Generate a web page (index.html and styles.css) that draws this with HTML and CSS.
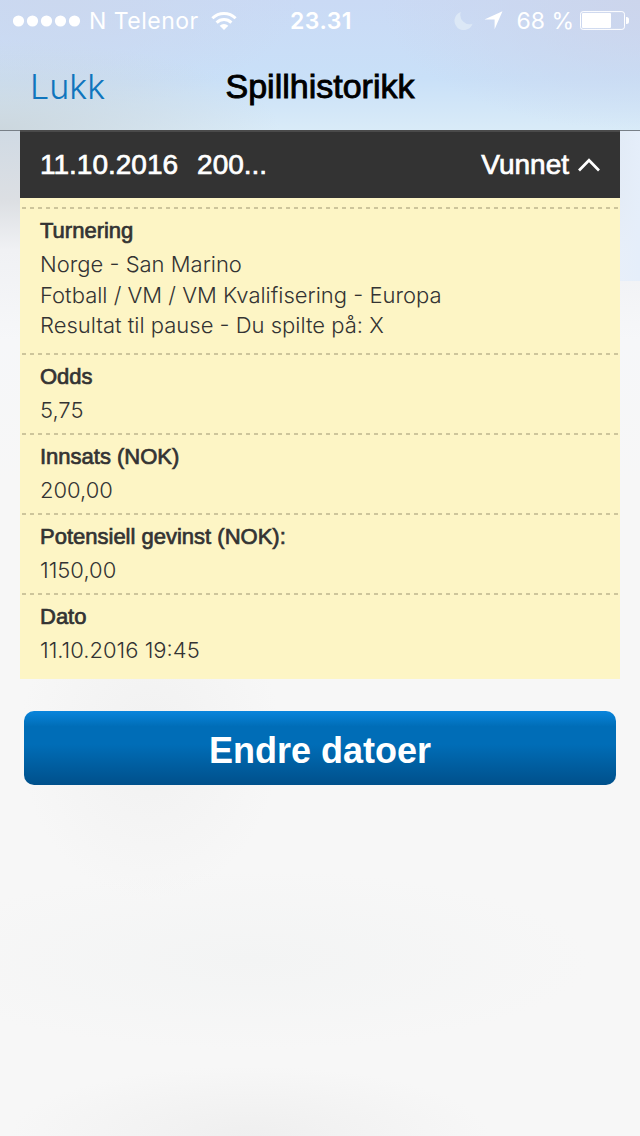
FILE: index.html
```
<!DOCTYPE html>
<html lang="no">
<head>
    <meta charset="UTF-8">
    <meta name="viewport" content="width=device-width, initial-scale=1.0">
    <title>Spillhistorikk</title>
    <link rel="stylesheet" href="styles.css">
</head>
<body>
    <header class="top">
        <div class="status-bar">
            <div class="status-left">
                <svg class="signal" width="68" height="12" viewBox="0 0 68 12" fill="#fff">
                    <circle cx="5.5" cy="6" r="5.6"/>
                    <circle cx="19.5" cy="6" r="5.6"/>
                    <circle cx="33.5" cy="6" r="5.6"/>
                    <circle cx="47.5" cy="6" r="5.6"/>
                    <circle cx="61.5" cy="6" r="5.6"/>
                </svg>
                <span class="carrier">N Telenor</span>
                <svg class="wifi" width="26" height="20" viewBox="0 0 26 20">
                    <path d="M1.4 7.2A16.6 16.6 0 0 1 24.6 7.2M5.6 11.6A10.6 10.6 0 0 1 20.4 11.6" fill="none" stroke="#fff" stroke-width="3"/>
                    <path d="M13 19L8.7 14.7A6.2 6.2 0 0 1 17.3 14.7Z" fill="#fff"/>
                </svg>
            </div>
            <div class="clock">23.31</div>
            <div class="status-right">
                <svg class="moon" width="19" height="18" viewBox="0 0 19 18">
                    <path d="M6.8 0A9.3 9.3 0 1 0 18.6 11.8A9.4 9.4 0 0 1 6.8 0Z" fill="#dce8f6"/>
                </svg>
                <svg class="location" width="19" height="19" viewBox="0 0 19 19">
                    <path d="M18.5 0.3L10.6 18.3V8.4H0.4Z" fill="#fff"/>
                </svg>
                <span class="percent">68 %</span>
                <svg class="battery" width="49" height="19" viewBox="0 0 49 19">
                    <rect x="0.5" y="0.6" width="44" height="17.8" rx="2.6" fill="none" stroke="#fff" stroke-width="1"/>
                    <rect x="2" y="2" width="29" height="15" rx="1" fill="#fff"/>
                    <path d="M46 6h.5a2.5 2.5 0 0 1 2.5 2.5v2a2.5 2.5 0 0 1-2.5 2.5H46z" fill="#fff"/>
                </svg>
            </div>
        </div>
        <nav class="nav-bar">
            <a class="close">Lukk</a>
            <h1>Spillhistorikk</h1>
        </nav>
    </header>
    <main>
        <section class="bet">
            <div class="bet-header">
                <span class="bet-date">11.10.2016</span>
                <span class="bet-amount">200...</span>
                <span class="bet-status">Vunnet</span>
                <svg class="chevron" width="22" height="14" viewBox="0 0 22 14">
                    <path d="M1 12.5L11 2.2L21 12.5" fill="none" stroke="#fff" stroke-width="2.7"/>
                </svg>
            </div>
            <div class="bet-details">
                <div class="row">
                    <h2 class="t-turnering">Turnering</h2>
                    <p>Norge - San Marino</p>
                    <p>Fotball / VM / VM Kvalifisering - Europa</p>
                    <p>Resultat til pause - Du spilte på: X</p>
                </div>
                <div class="row">
                    <h2>Odds</h2>
                    <p>5,75</p>
                </div>
                <div class="row">
                    <h2>Innsats (NOK)</h2>
                    <p>200,00</p>
                </div>
                <div class="row">
                    <h2>Potensiell gevinst (NOK):</h2>
                    <p>1150,00</p>
                </div>
                <div class="row">
                    <h2>Dato</h2>
                    <p>11.10.2016 19:45</p>
                </div>
            </div>
        </section>
        <button class="change-dates">Endre datoer</button>
    </main>
</body>
</html>
```
FILE: styles.css
```
* {
    box-sizing: border-box;
}
body {
    margin: 0;
    min-height: 1136px;
    font-family: "Liberation Sans", Arial, sans-serif;
    color: #333;
    background:
        linear-gradient(90deg, rgba(247,248,248,0) 80%, #e5eefa 100%) 0 131px / 100% 150px no-repeat,
        radial-gradient(ellipse 130px 160px at 150px 740px, #f1f1f1, rgba(241,241,241,0)),
        radial-gradient(ellipse 340px 90px at 250px 960px, #f3f4f4, rgba(243,244,244,0)),
        radial-gradient(ellipse 240px 70px at 250px 1136px, #efefef, rgba(239,239,239,0)),
        linear-gradient(180deg, #d0dae4 131px, #dcdfe3 200px, #f0f1f4 250px, #f6f7f9 340px, #f7f7f7 480px);
}
.top {
    height: 131px;
    border-bottom: 1px solid #787f87;
    background:
        radial-gradient(ellipse 280px 90px at 0 130px, #ccd7de, rgba(204,215,222,0)),
        radial-gradient(ellipse 260px 130px at 640px 0, #ccd5ec, rgba(204,213,236,0)),
        radial-gradient(ellipse 240px 110px at 60px 0, #cbd8ef, rgba(203,216,239,0)),
        linear-gradient(180deg, #cadaf5, #c9e0f8 60%, #d9ebf8);
}
.status-bar {
    display: grid;
    grid-template-columns: 1fr auto 1fr;
    align-items: center;
    height: 41px;
    padding: 0 11px 0 13px;
    font-family: Inter, sans-serif;
    font-size: 23px;
    color: #fff;
}
.status-left,
.status-right {
    display: flex;
    align-items: center;
}
.status-right {
    justify-content: flex-end;
}
.carrier {
    margin: 0 12px 0 8px;
    letter-spacing: 0.5px;
}
.clock {
    font-weight: 600;
    letter-spacing: 0.5px;
}
.location {
    margin: 0 13px 0 11px;
}
.percent {
    margin-right: 6px;
}
.nav-bar {
    display: grid;
    grid-template-columns: 1fr auto 1fr;
    align-items: center;
    height: 90px;
    padding: 0 30px;
    font-size: 34px;
}
.close {
    font-family: Inter, sans-serif;
    font-weight: 300;
    color: #0f75bd;
}
h1 {
    margin: 0;
    font-size: 34px;
    font-weight: 400;
    color: #000;
    -webkit-text-stroke: 0.9px #000;
}
main {
    padding: 0 20px;
}
.bet-header {
    display: flex;
    align-items: center;
    height: 68px;
    margin-top: -1px;
    padding: 0 20px;
    border-top: 2px solid #4a4a4a;
    background: #333;
    color: #fff;
    font-size: 28px;
    -webkit-text-stroke: 0.7px #fff;
}
.bet-amount {
    margin-left: 19px;
}
.bet-status {
    margin-left: auto;
}
.chevron {
    margin-left: 9px;
}
.bet-details {
    padding: 9px 2px 0;
    height: 481px;
    background: #fdf5c5;
}
.row {
    height: 80px;
    padding: 9px 18px 0;
    /* evenly spaced dashes, 4px on and 4px off */
    background: repeating-linear-gradient(90deg, #cdc59b 0 4px, transparent 4px 8px) 0 0 / 100% 2px no-repeat;
}
.row:first-child {
    height: 146px;
}
h2 {
    margin: 0 0 3px;
    font-size: 22px;
    font-weight: 400;
    line-height: 30px;
    -webkit-text-stroke: 0.7px #333;
}
p {
    margin: 0;
    font-family: Inter, sans-serif;
    font-size: 22px;
    font-weight: 300;
    line-height: 30.5px;
}
.change-dates {
    display: block;
    width: 592px;
    height: 74px;
    margin: 32px auto 0;
    padding: 6px 0 0;
    border: 0;
    border-radius: 10px;
    background: linear-gradient(180deg, #0985dc 0%, #006db7 21%, #006db7 45%, #00508b 100%);
    color: #fff;
    font-family: "Liberation Sans", Arial, sans-serif;
    font-size: 36px;
    font-weight: 700;
}
```
